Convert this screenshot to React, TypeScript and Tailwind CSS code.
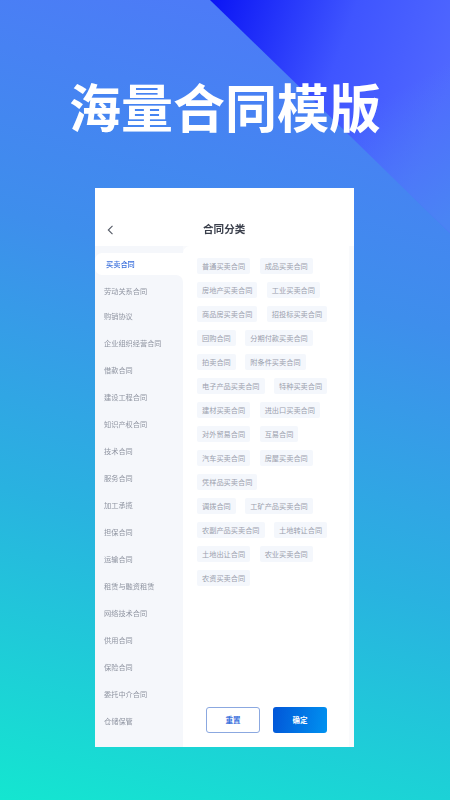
// 合同分类 宣传页 — 渐变背景上的大标题和一张手机页面截图
const FONT = "font-['Noto_Sans_CJK_SC','Noto_Sans',sans-serif]";

const CATEGORIES = [
  "劳动关系合同",
  "购销协议",
  "企业组织经营合同",
  "借款合同",
  "建设工程合同",
  "知识产权合同",
  "技术合同",
  "服务合同",
  "加工承揽",
  "担保合同",
  "运输合同",
  "租赁与融资租赁",
  "网络技术合同",
  "供用合同",
  "保险合同",
  "委托中介合同",
  "仓储保管",
];

const TAG_ROWS = [
  ["普通买卖合同", "成品买卖合同"],
  ["房地产买卖合同", "工业买卖合同"],
  ["商品房买卖合同", "招投标买卖合同"],
  ["回购合同", "分期付款买卖合同"],
  ["拍卖合同", "附条件买卖合同"],
  ["电子产品买卖合同", "特种买卖合同"],
  ["建材买卖合同", "进出口买卖合同"],
  ["对外贸易合同", "互易合同"],
  ["汽车买卖合同", "房屋买卖合同"],
  ["凭样品买卖合同"],
  ["调拨合同", "工矿产品买卖合同"],
  ["农副产品买卖合同", "土地转让合同"],
  ["土地出让合同", "农业买卖合同"],
  ["农资买卖合同"],
];

function CornerShape() {
  return (
    <svg className="absolute right-0 top-0" width="240" height="240" viewBox="0 0 240 240">
      <defs>
        <linearGradient id="corner" x1="0" y1="0" x2="1" y2="0.35">
          <stop offset="0" stopColor="#0a14f5" />
          <stop offset="0.55" stopColor="#3f55ff" />
          <stop offset="1" stopColor="#5068ff" />
        </linearGradient>
        <linearGradient id="fade" x1="0.6" y1="0.5" x2="0.9" y2="1">
          <stop offset="0" stopColor="#4a84f4" stopOpacity="0" />
          <stop offset="1" stopColor="#4a84f4" stopOpacity="1" />
        </linearGradient>
      </defs>
      <polygon points="0,0 240,0 240,233" fill="url(#corner)" />
      <polygon points="0,0 240,0 240,233" fill="url(#fade)" />
    </svg>
  );
}

export default function App() {
  return (
    <div
      className={`relative flex h-[800px] w-[450px] flex-col items-center overflow-hidden bg-[linear-gradient(195deg,#5076fa_0%,#3e8eec_36%,#29b2e0_66%,#14e6d0_100%)] ${FONT}`}
    >
      <CornerShape />

      <h1 className="relative mt-[68px] h-[76px] text-[52px] font-bold leading-[76px] text-white">
        海量合同模版
      </h1>

      <div className="relative ml-[-1px] mt-[44px] h-[559px] w-[259px] overflow-hidden bg-white">
        <div className="flex h-full flex-col blur-[0.35px]">
          <div className="flex h-[58px] shrink-0 items-end pb-[9px]">
            <svg className="mb-[2px] ml-[12px]" width="7" height="10" viewBox="0 0 7 10" fill="none">
              <path d="M5.5 0.8 1.3 5l4.2 4.2" stroke="#555a66" strokeWidth="1.1" />
            </svg>
            <span className="ml-[89px] text-[10.6px] font-semibold leading-[16px] text-[#3a3f4b]">
              合同分类
            </span>
          </div>

          <div className="flex min-h-0 flex-1 bg-[#f9fafc]">
            <div className="w-[88px] shrink-0 overflow-hidden bg-[#f5f7fb] pt-[7px]">
              <div className="flex h-[22px] items-center rounded-l-[7px] bg-white pl-[11px] text-[7.2px] font-medium text-[#3a6fdc]">
                买卖合同
              </div>
              <div className="bg-white">
                <div className="rounded-tr-[7px] bg-[#f5f7fb] pt-[2.5px]">
                  {CATEGORIES.map((name, i) => (
                    <div
                      key={name}
                      className={
                        i === 1
                          ? "flex h-[25px] items-center pb-[2px] pl-[9px] text-[7.2px] text-[#8f94a1]"
                          : "flex h-[27px] items-center pl-[9px] text-[7.2px] text-[#8f94a1]"
                      }
                    >
                      {name}
                    </div>
                  ))}
                </div>
              </div>
            </div>

            <div className="flex w-[166px] flex-col rounded-tl-[7px] bg-white pl-[14px] pt-[12px]">
              <div className="flex flex-col gap-[8px]">
                {TAG_ROWS.map((row) => (
                  <div key={row[0]} className="flex gap-[9.5px]">
                    {row.map((tag) => (
                      <span
                        key={tag}
                        className="flex h-[16px] items-center rounded-[2px] bg-[#f4f7fc] px-[5px] text-[7.2px] text-[#9ba0ad]"
                      >
                        {tag}
                      </span>
                    ))}
                  </div>
                ))}
              </div>

              <div className="mb-[14px] mt-auto flex gap-[13px] pl-[9px]">
                <button
                  type="button"
                  className="h-[26px] w-[54px] rounded-[3px] border-[1.3px] border-[#8ba8e0] bg-white text-[7.5px] font-semibold text-[#3a6fdc]"
                >
                  重置
                </button>
                <button
                  type="button"
                  className="h-[26px] w-[54px] rounded-[3px] bg-[linear-gradient(100deg,#0256d8,#0092f0)] text-[7.5px] font-semibold text-white"
                >
                  确定
                </button>
              </div>
            </div>
          </div>
        </div>
      </div>
    </div>
  );
}
